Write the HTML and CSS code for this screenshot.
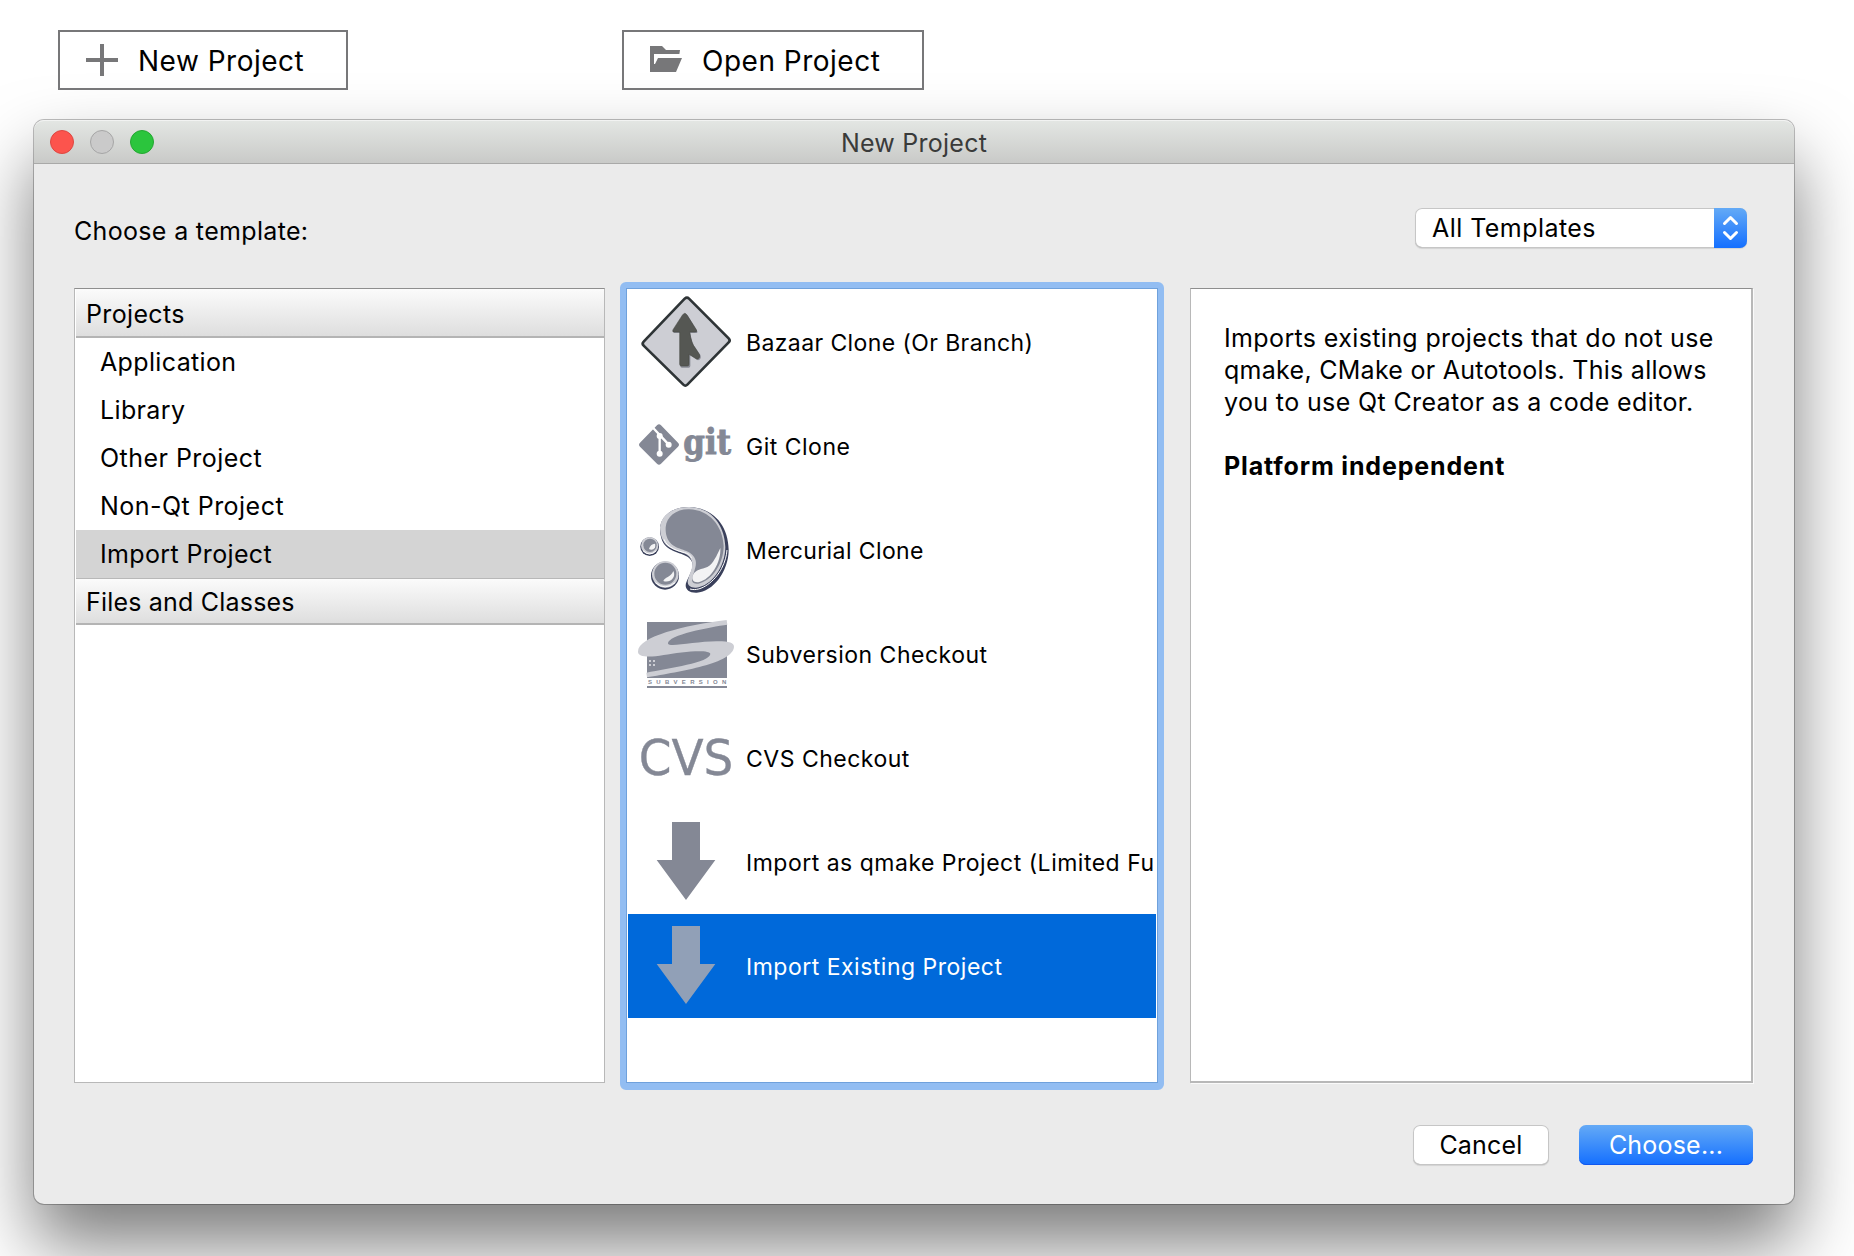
FILE: index.html
```html
<!DOCTYPE html>
<html lang="en">
<head>
<meta charset="utf-8">
<title>New Project</title>
<link rel="stylesheet" href="styles.css">
</head>
<body>
<header class="welcome">
  <button class="action new"><svg class="action-icon" viewBox="0 0 32 32"><path d="M14 0h4v14h14v4H18v14h-4V18H0v-4h14z"/></svg><span class="action-label">New Project</span></button>
  <button class="action open"><svg class="action-icon" viewBox="0 0 32 32"><path d="M0 2h12l4 4h14l-.6 4H4v10h1l3-6h24l-6 14H0z"/></svg><span class="action-label">Open Project</span></button>
</header>

<main class="window">
  <div class="titlebar">
    <div class="lights"><i class="light close"></i><i class="light minimize"></i><i class="light zoom"></i></div>
    <span class="title">New Project</span>
  </div>

  <div class="content">
    <div class="chooser">
      <span class="label">Choose a template:</span>
      <div class="select">
        <span class="select-value">All Templates</span>
        <svg class="stepper" viewBox="0 0 33 40"><path d="M10.500 15.500l6-6 6 6M10.500 24.500l6 6 6-6"/></svg>
      </div>
    </div>

    <div class="panels">
      <nav class="panel categories">
        <div class="group first">Projects</div>
        <div class="category">Application</div>
        <div class="category">Library</div>
        <div class="category wide">Other Project</div>
        <div class="category wide">Non-Qt Project</div>
        <div class="category selected">Import Project</div>
        <div class="group">Files and Classes</div>
      </nav>

      <section class="templates">
        <div class="template">
          <svg class="icon" viewBox="78 45 300 312">
            <path class="bzr-sign" d="M224 71q7-6 13 0L356 190q6 6 0 12L232 329q-6 6-12 0L101 212q-6-6 0-12z"/>
            <path class="bzr-shadow" d="M227 118q4 0 7 5l27 44q4 7-4 7h-16q5 35 17 48l14 20q2 11-8 14l-23-15v32q0 5-5 5h-20q-5 0-5-5V174h-17q-6 0-3-7l29-45z"/>
            <path class="bzr-arrow" d="M224 115q4 0 7 5l28 44q4 7-4 7h-16q5 35 17 48l13 20q2 11-8 14l-24-15v30q0 5-5 5h-18q-5 0-5-5V171h-17q-6 0-3-7l29-45z"/>
          </svg>
          <span class="name tight">Bazaar Clone (Or Branch)</span>
        </div>
        <div class="template">
          <svg class="icon" viewBox="78 357 300 312">
            <path class="grey" d="M141 451q6-6 12 0l51 52q6 6 0 12l-51 51q-6 6-12 0l-51-51q-6-6 0-12z"/>
            <path class="git-branch" d="M127 456l22 24v57M151 482l25 27"/>
            <circle class="white" cx="149" cy="483" r="9"/><circle class="white" cx="176" cy="509" r="9"/><circle class="white" cx="149" cy="536" r="9"/>
            <text class="git-word" x="220" y="538" textLength="143" lengthAdjust="spacingAndGlyphs">git</text>
          </svg>
          <span class="name">Git Clone</span>
        </div>
        <div class="template">
          <svg class="icon" viewBox="78 54 300 312">
            <path class="navy" d="M150 146c2-40 40-66 88-65 74 2 117 58 118 128 0 64-46 126-96 129-26 1-38-14-31-31 9-24 24-44 17-61-12-28-50-21-78-47-12-12-18-32-18-53z"/>
            <path class="silver" d="M150 142c4-38 40-62 88-61 70 2 106 58 108 120 0 60-42 118-88 122-18 1-28-8-24-24 5-20 18-40 11-57-10-30-49-22-77-48-12-12-18-32-18-52z"/>
            <path class="shine-line" d="M162 178c10 27 44 35 62 40 15 4 18 10 21 17M240 327c34 10 76-25 95-62 10-20 15-38 16-55"/>
            <path class="grey" d="M167 142c3-32 32-55 70-54 62 1 102 52 104 110 0 54-37 106-76 113-15 2-22-5-18-19 5-18 16-40 8-56-12-28-46-23-71-44-13-12-18-30-17-50z"/>
            <path class="white-soft" d="M249 285c8-17 26-17 43-24 17-8 29-36 39-57 3 44-29 94-63 102-17 3-25-6-19-21z"/>
            <circle class="navy" cx="119" cy="200" r="28"/><circle class="silver" cx="119" cy="197" r="26"/><circle class="grey" cx="120" cy="196" r="20"/><path class="white-soft" d="M117 207c2-10 9-15 18-16 4 13-7 22-18 16z"/><path class="shine-line" d="M99 212q19 20 40 0"/>
            <circle class="navy" cx="165" cy="287" r="42"/><circle class="silver" cx="166" cy="283" r="40"/><circle class="grey" cx="166" cy="281" r="33"/><path class="white-soft" d="M160 303c4-12 22-10 30-30 10 20-11 37-30 30z"/><path class="shine-line" d="M136 308q29 25 59 0"/>
          </svg>
          <span class="name tight">Mercurial Clone</span>
        </div>
        <div class="template">
          <svg class="icon" viewBox="78 366 300 312">
            <path class="grey" d="M111 426h240v168H111zM111 618h240v6H111z"/>
            <path class="silver" d="M350 420l2 14c-50 7-180 30-178 57 4 12 90-8 150-7 34 0 48 5 48 16-2 50-160 74-261 92l-2-14c70-14 190-30 192-56-2-16-90-6-140 3-45 8-77 6-77-10 0-46 140-79 266-95z"/>
            <path class="silver" d="M117 540h6v6h-6zM129 540h6v6h-6zM117 552h6v6h-6zM129 552h6v6h-6z"/>
            <text class="svn-word" x="114" y="613" textLength="235">SUBVERSION</text>
          </svg>
          <span class="name">Subversion Checkout</span>
        </div>
        <div class="template">
          <svg class="icon" viewBox="78 -12 300 312">
            <text class="cvs-word" x="86" y="196" textLength="284" lengthAdjust="spacingAndGlyphs">CVS</text>
          </svg>
          <span class="name">CVS Checkout</span>
        </div>
        <div class="template">
          <svg class="icon" viewBox="78 300 300 312"><path class="grey" d="M186 336h84v114h46l-88 120-88-120h46z"/></svg>
          <span class="name">Import as qmake Project (Limited Fu</span>
        </div>
        <div class="template current">
          <svg class="icon" viewBox="78 612 300 312"><path class="arrow-current" d="M186 648h84v114h46l-88 120-88-120h46z"/></svg>
          <span class="name">Import Existing Project</span>
        </div>
      </section>

      <section class="panel details">
        <p>Imports existing projects that do not use<br><span class="snug">qmake, CMake or Autotools. This allows</span><br>you to use Qt Creator as a code editor.</p>
        <p class="platform">Platform independent</p>
      </section>
    </div>

    <footer class="buttons">
      <button class="push cancel">Cancel</button>
      <button class="push choose">Choose...</button>
    </footer>
  </div>
</main>
</body>
</html>
```
FILE: styles.css
```css
* { box-sizing: border-box; }
body {
  margin: 0;
  width: 1854px;
  height: 1256px;
  overflow: hidden;
  background: #fff;
  color: #000;
  font-family: Inter, "Liberation Sans", sans-serif;
  font-size: 25px;
}
button { font: inherit; color: inherit; }
p { margin: 0; }

.welcome { display: flex; gap: 274px; padding: 30px 0 0 58px; height: 120px; }
.action {
  display: flex;
  align-items: center;
  height: 60px;
  padding: 0 0 0 26px;
  gap: 20px;
  border: 2px solid #777779;
  background: none;
  font-size: 28px;
  letter-spacing: .5px;
  white-space: nowrap;
}
.action-label { padding-top: 2px; }
.new { width: 290px; }
.open { width: 302px; }
.action-icon { flex: none; width: 32px; height: 32px; fill: #777779; }

.window {
  width: 1760px;
  height: 1084px;
  margin-left: 34px;
  border-radius: 10px;
  background: #ebebeb;
  box-shadow: 0 0 0 1px rgba(0, 0, 0, .25), 0 40px 72px rgba(0, 0, 0, .52);
}
.titlebar {
  position: relative;
  display: flex;
  align-items: center;
  justify-content: center;
  height: 44px;
  border-radius: 10px 10px 0 0;
  border-top: 1px solid #f2f3f2;
  border-bottom: 1px solid #a9a9a8;
  background: linear-gradient(#e3e6e3, #c9cac8);
}
.lights { position: absolute; left: 16px; top: 9px; display: flex; gap: 16px; }
.light { width: 24px; height: 24px; border-radius: 50%; border: 1px solid; }
.close { background: #fc544d; border-color: #dd4741; }
.minimize { background: #cacaca; border-color: #a6a6a6; }
.zoom { background: #2bc53d; border-color: #24a732; }
.title { padding-top: 2px; letter-spacing: .25px; color: #3a3b3a; }

.content { padding: 44px 41px 0 40px; }
.chooser { display: flex; justify-content: space-between; height: 80px; padding-right: 6px; }
.label { height: 46px; line-height: 46px; letter-spacing: .33px; }
.select {
  display: flex;
  justify-content: space-between;
  align-items: center;
  width: 332px;
  height: 40px;
  padding-left: 17px;
  border-radius: 7px;
  background: #fff;
  box-shadow: inset 0 0 0 1px #c6c6c6, inset 0 -1px 0 #aaa, 0 1px 1px rgba(0, 0, 0, .1);
}
.select-value { letter-spacing: .45px; }
.stepper {
  width: 33px;
  height: 40px;
  border-radius: 0 7px 7px 0;
  background: linear-gradient(#64aaf6, #146fff);
  fill: none;
  stroke: #fff;
  stroke-width: 3;
  stroke-linecap: round;
  stroke-linejoin: round;
}

.panels {
  display: grid;
  grid-template-columns: 531px 544px 574px;
  grid-template-rows: 795px;
  column-gap: 15px;
}
.panel { border: 1px solid #b8b8b8; border-top-color: #8e8e8e; background: #fff; }
.categories { padding-left: 1px; }
.group {
  height: 47px;
  padding-left: 10px;
  line-height: 47px;
  letter-spacing: .2px;
  border-top: 1px solid #b8b8b8;
  border-bottom: 2px solid #b4b4b4;
  background: linear-gradient(#fbfbfb, #dedede);
}
.first { height: 49px; padding-top: 1px; border-top: 0; line-height: 49px; letter-spacing: .35px; }
.category { height: 48px; padding-left: 24px; line-height: 48px; letter-spacing: .36px; }
.wide { letter-spacing: .47px; }
.selected { background: #d4d4d4; }

.templates {
  height: 808px;
  margin-top: -6px;
  border: 6px solid #92bdf2;
  border-bottom-width: 7px;
  border-radius: 6px;
  background: #fff;
  box-shadow: inset 0 0 0 1px #6fa1dc;
  padding: 2px 2px 0;
  font-size: 23px;
  letter-spacing: .5px;
}
.template { display: flex; align-items: center; height: 104px; padding-left: 8px; gap: 10px; white-space: nowrap; }
.name { padding-top: 2px; }
.tight { letter-spacing: .4px; }
.current { background: #0069da; color: #fff; }
.icon { flex: none; width: 100px; height: 104px; overflow: visible; }

.details {
  margin-left: 11px;
  padding: 33px 0 0 33px;
  border-right-width: 2px;
  border-bottom-width: 2px;
  box-shadow: 1px 1px 0 #fafafa;
  line-height: 32px;
  letter-spacing: .37px;
  white-space: nowrap;
}
.snug { letter-spacing: .28px; }
.platform { margin-top: 32px; font-weight: 700; letter-spacing: .85px; }

.buttons { display: flex; justify-content: flex-end; gap: 30px; padding-top: 42px; }
.push { height: 40px; border: 0; border-radius: 7px; padding: 0; letter-spacing: .2px; }
.cancel { width: 136px; background: #fff; box-shadow: inset 0 0 0 1px #c6c6c6, inset 0 -1px 0 #aaa, 0 1px 1px rgba(0, 0, 0, .1); }
.choose { width: 174px; color: #fff; background: linear-gradient(#64aaf6, #146fff); box-shadow: inset 0 -1px 0 #1258ee; }

.grey { fill: #848895; }
.silver { fill: #cdced4; }
.navy { fill: #3a405b; }
.white { fill: #fff; }
.white-soft { fill: #f3f3f4; }
.arrow-current { fill: #91a0b7; }
.shine-line { fill: none; stroke: #fff; stroke-width: 3; }
.bzr-sign { fill: #cdced4; stroke: #2e3436; stroke-width: 8; }
.bzr-arrow { fill: #555753; stroke: #42443f; stroke-width: 1.500; }
.bzr-shadow { fill: #888a94; }
.git-branch { fill: none; stroke: #fff; stroke-width: 7; }
.git-word { font: bold 108px "DejaVu Serif", serif; letter-spacing: 0; fill: #848895; stroke: #848895; stroke-width: 3; }
.svn-word { font: bold 18px "Liberation Sans", sans-serif; letter-spacing: 0; fill: #848895; }
.cvs-word { font: 400 149px "DejaVu Sans", sans-serif; letter-spacing: 0; fill: #848895; stroke: #848895; stroke-width: 1; }
```
